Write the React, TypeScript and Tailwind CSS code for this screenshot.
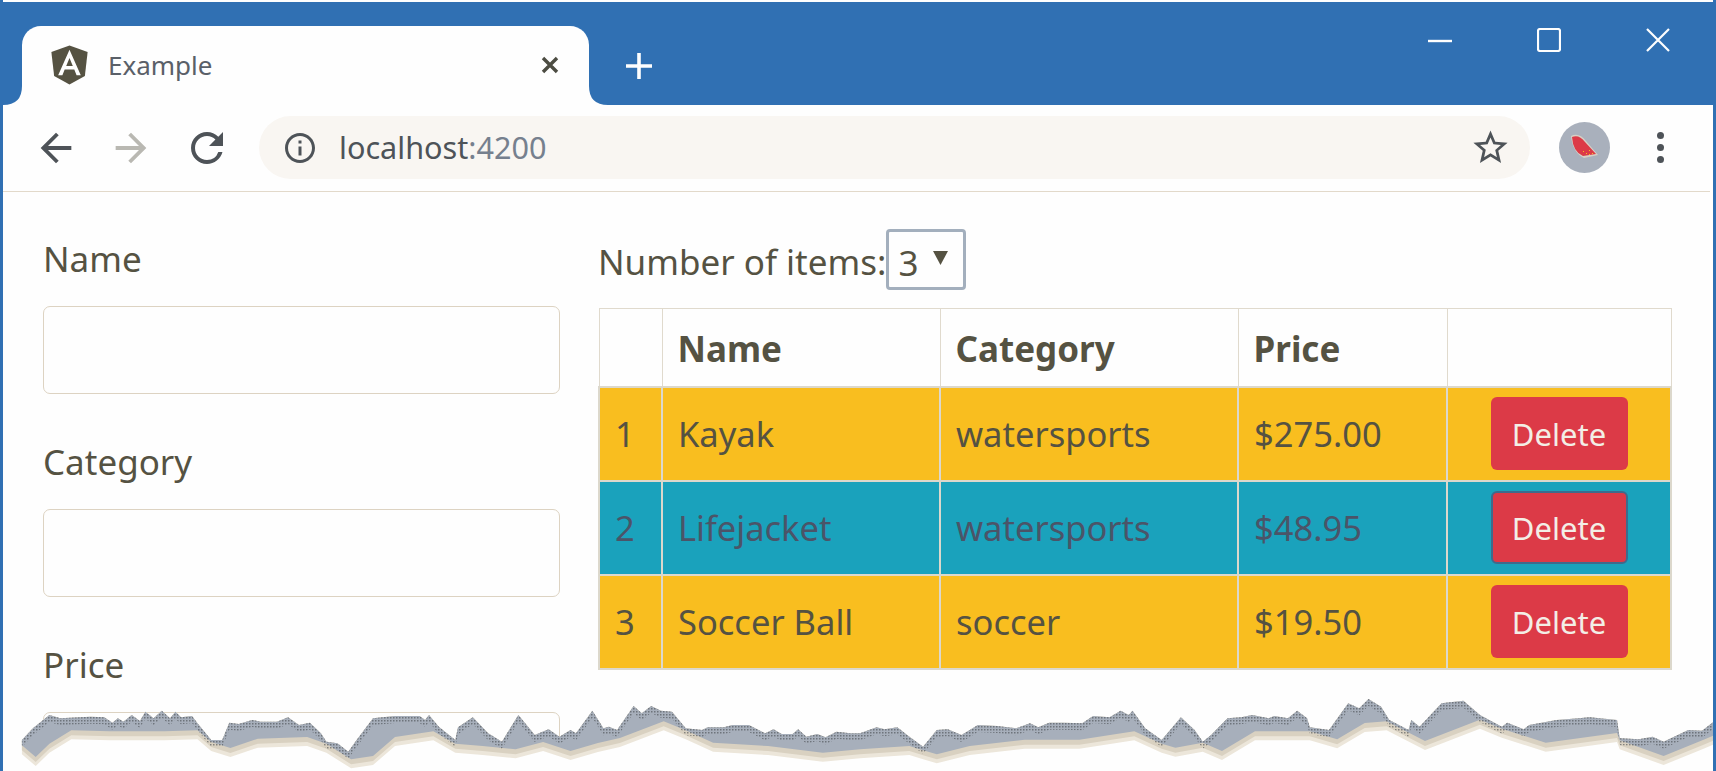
import React from 'react';

const rows = [
  { id: 1, name: 'Kayak', category: 'watersports', price: '$275.00', info: false },
  { id: 2, name: 'Lifejacket', category: 'watersports', price: '$48.95', info: true },
  { id: 3, name: 'Soccer Ball', category: 'soccer', price: '$19.50', info: false },
];

// torn paper edge, traced from the picture
const left = (p: number[][]) => p.map(([x, y]) => [x / 1.823, 640 + y / 3]);
const right = (p: number[][]) => p.map(([x, y]) => [860 + x / 1.823, 640 + y / 3]);

const tearTop = [
  ...left([[40,300],[60,265],[90,225],[110,235],[165,230],[190,232],[205,248],[215,235],[225,245],[240,225],[255,243],[265,215],[280,235],[295,212],[310,235],[320,215],[330,232],[350,228],[360,250],[385,300],[405,300],[418,248],[435,252],[460,240],[475,245],[505,245],[525,232],[545,255],[565,248],[585,280],[595,305],[615,310],[635,335],[650,300],[680,235],[720,228],[765,228],[775,240],[782,225],[800,260],[830,300],[835,262],[862,232],[890,280],[915,305],[945,225],[975,285],[1000,268],[1020,290],[1040,270],[1050,280],[1080,212],[1100,265],[1110,260],[1125,270],[1155,198],[1170,220],[1187,198],[1205,212],[1225,215],[1250,265],[1280,270],[1290,262],[1320,262],[1335,255],[1365,255],[1395,280],[1410,268],[1425,282],[1445,282],[1455,268],[1470,290],[1490,282],[1505,292],[1525,275],[1550,280]]),
  ...right([[0,280],[30,262],[45,268],[68,262],[90,290],[115,320],[140,270],[160,268],[185,285],[215,255],[250,258],[285,265],[310,250],[325,262],[345,248],[370,248],[405,250],[425,228],[455,232],[475,212],[490,225],[497,212],[520,265],[550,300],[585,232],[610,270],[625,305],[640,285],[670,235],[695,232],[715,225],[745,235],[755,228],[780,235],[797,212],[815,235],[820,262],[855,270],[890,190],[910,205],[927,177],[950,200],[965,240],[1000,270],[1005,240],[1020,260],[1060,190],[1100,182],[1130,225],[1170,260],[1180,248],[1210,268],[1220,255],[1270,240],[1310,235],[1330,232],[1380,240],[1385,295],[1420,298],[1445,290],[1465,305],[1510,270],[1535,272],[1568,230]]),
];

const tearBottom = [
  ...left([[40,310],[65,345],[90,305],[130,265],[200,268],[300,268],[360,265],[385,300],[420,318],[470,290],[560,285],[595,305],[640,352],[680,342],[720,285],[790,268],[830,305],[880,312],[940,322],[990,300],[1040,327],[1090,303],[1130,288],[1210,238],[1250,265],[1300,302],[1400,312],[1500,332]]),
  ...right([[0,322],[90,312],[115,325],[140,337],[200,312],[300,293],[400,293],[500,268],[550,305],[575,317],[625,302],[660,327],[720,268],[820,268],[870,292],[920,243],[960,238],[1030,297],[1130,233],[1170,260],[1250,302],[1380,273],[1385,295],[1465,342],[1540,292],[1568,272]]),
];

const pts = (p: number[][], dy = 0) => p.map(([x, y]) => `${x.toFixed(1)},${(y + dy).toFixed(1)}`).join(' ');
const band = (dy: number) => `${pts(tearTop)} ${pts([...tearBottom].reverse(), dy)}`;

const Field = ({ label }: { label: string }) => (
  <div className="mb-[43px]">
    <label className="block h-[50px] leading-[50px] mb-[22px]">{label}</label>
    <input type="text" className="block w-full h-[88px] bg-[#fefefe] border border-[#ddd3c2] rounded-[7px]" />
  </div>
);

const App: React.FC = () => {
  return (
    <div className="relative h-[771px] overflow-hidden bg-[#fefefe] border-x-[3px] border-[#3070b3] font-['Noto_Sans',sans-serif] text-[#555242] text-[35px]">
      {/* Title bar */}
      <div className="mt-[2px] h-[103px] bg-[#3070b3] flex items-end">
        <svg width="19" height="19" viewBox="0 0 19 19" className="shrink-0">
          <path d="M0 19 Q19 19 19 0 L19 19 Z" fill="#fefefe" />
        </svg>
        <div className="w-[567px] h-[79px] bg-[#fefefe] rounded-t-[19px] flex items-center pl-[29px] pb-[1px]">
          <svg width="37" height="40" viewBox="30 28 190 204" className="shrink-0">
            <polygon points="125,30 31.9,63.2 46.1,186.3 125,230 203.9,186.3 218.1,63.2" fill="#555242" />
            <path d="M125 52.1 66.8 182.6h21.7l11.7-29.2h49.4l11.7 29.2h21.7L125 52.1zM142 135.4h-34l17-40.9 17 40.9z" fill="#fefefe" />
          </svg>
          <span className="ml-[20px] text-[26px] text-[#5a6068]">Example</span>
          <svg width="20" height="20" viewBox="0 0 20 20" className="ml-auto mr-[29px]">
            <path d="M3 3 17 17M17 3 3 17" stroke="#4c4c42" strokeWidth="3.4" />
          </svg>
        </div>
        <svg width="19" height="19" viewBox="0 0 19 19" className="shrink-0">
          <path d="M0 0 Q0 19 19 19 L0 19 Z" fill="#fefefe" />
        </svg>
        <svg width="28" height="28" viewBox="0 0 28 28" className="ml-[17px] mb-[25px] shrink-0">
          <path d="M14 1V27M1 14H27" stroke="#fefefe" strokeWidth="3.6" />
        </svg>
        <div className="ml-auto mr-[43px] self-start mt-[26px] flex gap-[85px]">
          <svg width="24" height="24" viewBox="0 0 24 24">
            <path d="M0 13H24" stroke="#fefefe" strokeWidth="2.4" />
          </svg>
          <svg width="24" height="24" viewBox="0 0 24 24" fill="none">
            <rect x="1" y="1" width="22" height="22" rx="2" stroke="#fefefe" strokeWidth="2.2" />
          </svg>
          <svg width="24" height="24" viewBox="0 0 24 24">
            <path d="M1 1 23 23M23 1 1 23" stroke="#fefefe" strokeWidth="2.2" />
          </svg>
        </div>
      </div>

      {/* Toolbar */}
      <div className="h-[87px] mr-[3px] border-b border-[#e2d9ca] flex items-center pl-[30px] pb-[1px]">
        <svg width="46" height="46" viewBox="0 0 24 24" fill="#4e5358" className="shrink-0">
          <path d="M20 11H7.83l5.59-5.59L12 4l-8 8 8 8 1.41-1.41L7.83 13H20v-2z" />
        </svg>
        <svg width="46" height="46" viewBox="0 0 24 24" fill="#b9b8b2" className="ml-[29px] shrink-0">
          <path d="M4 11h12.17l-5.59-5.59L12 4l8 8-8 8-1.41-1.41L16.17 13H4v-2z" />
        </svg>
        <svg width="48" height="48" viewBox="0 0 24 24" fill="#4e5358" className="ml-[29px] shrink-0">
          <path d="M17.65 6.35A7.958 7.958 0 0 0 12 4c-4.42 0-7.99 3.58-7.99 8s3.57 8 7.99 8c3.73 0 6.84-2.55 7.73-6h-2.08A5.99 5.99 0 0 1 12 18c-3.31 0-6-2.69-6-6s2.69-6 6-6c1.66 0 3.14.69 4.22 1.78L13 11h7V4l-2.35 2.35z" />
        </svg>
        <div className="ml-[28px] w-[1271px] h-[63px] rounded-full bg-[#f9f6f2] flex items-center pl-[23px] pr-[19px] shrink-0">
          <svg width="36" height="36" viewBox="0 0 24 24" fill="#4e5358" className="shrink-0">
            <path d="M11 7h2v2h-2zm0 4h2v6h-2zm1-9C6.48 2 2 6.48 2 12s4.48 10 10 10 10-4.48 10-10S17.52 2 12 2zm0 18c-4.41 0-8-3.59-8-8s3.59-8 8-8 8 3.59 8 8-3.59 8-8 8z" />
          </svg>
          <span className="ml-[21px] text-[30.6px] text-[#4e5358]">
            localhost<span className="text-[#76808e]">:4200</span>
          </span>
          <svg width="41" height="41" viewBox="0 0 24 24" fill="#4e5358" className="ml-auto shrink-0">
            <path d="M22 9.24l-7.19-.62L12 2 9.19 8.63 2 9.24l5.46 4.73L5.82 21 12 17.27 18.18 21l-1.63-7.03L22 9.24zM12 15.4l-3.76 2.27 1-4.28-3.32-2.88 4.38-.38L12 6.1l1.71 4.04 4.38.38-3.32 2.88 1 4.28L12 15.4z" />
          </svg>
        </div>
        <svg width="51" height="51" viewBox="0 0 51 51" className="ml-[29px] shrink-0">
          <circle cx="25.5" cy="25.5" r="25.5" fill="#a9b0bc" />
          <path d="M12 14 Q20 10 27 19 L39 33 L25 36 Q14 31 12 14Z" fill="#d8d0c4" />
          <path d="M13 15 Q20 12 26 20 L37 32 L24 34 Q14 30 13 15Z" fill="#dc3a47" />
          <path d="M24 29h1v1h-1zM27 31h1v1h-1zM30 28h1v1h-1zM33 31h1v1h-1zM30 32h1v1h-1z" fill="#f9be1f" />
        </svg>
        <div className="ml-[47px] flex flex-col gap-[5px] shrink-0">
          <span className="block w-[7px] h-[7px] rounded-full bg-[#4e5358]" />
          <span className="block w-[7px] h-[7px] rounded-full bg-[#4e5358]" />
          <span className="block w-[7px] h-[7px] rounded-full bg-[#4e5358]" />
        </div>
      </div>

      {/* Page */}
      <div className="grid grid-cols-[518px_1072px] gap-x-[38px] pl-[39px]">
        <div className="pt-[42px] pl-[1px]">
          <Field label="Name" />
          <Field label="Category" />
          <Field label="Price" />
        </div>
        <div className="pt-[37px]">
          <div className="flex items-center h-[61px] mb-[18px]">
            <span className="pt-[5px]">Number of items:</span>
            <div className="relative">
              <select className="appearance-none block w-[80px] h-[61px] pl-[9px] pt-[5px] bg-[#fefefe] border-[3px] border-[#a3afbd] rounded-[4px]">
                <option>3</option>
              </select>
              <svg width="15" height="14" viewBox="0 0 15 14" className="absolute left-[47px] top-[22px] pointer-events-none">
                <path d="M0 0H15L7.5 14Z" fill="#555242" />
              </svg>
            </div>
          </div>
          <table className="w-[1072px] table-fixed border-collapse">
            <colgroup>
              <col className="w-[63px]" />
              <col className="w-[278px]" />
              <col className="w-[298px]" />
              <col className="w-[209px]" />
              <col className="w-[224px]" />
            </colgroup>
            <thead>
              <tr className="h-[78px]">
                <th className="border border-[#e0dacd]" />
                <th className="border border-[#e0dacd] px-[15px] pt-[4px] text-left font-bold">Name</th>
                <th className="border border-[#e0dacd] px-[15px] pt-[4px] text-left font-bold">Category</th>
                <th className="border border-[#e0dacd] px-[15px] pt-[4px] text-left font-bold">Price</th>
                <th className="border border-[#e0dacd]" />
              </tr>
            </thead>
            <tbody className="text-[34.5px]">
              {rows.map(row => (
                <tr key={row.id} className={`h-[94px] ${row.info ? 'bg-[#1aa2bc] text-[#4b5468]' : 'bg-[#f9be1f]'}`}>
                  <td className="border-2 border-[#dcd8cc] px-[15px]">{row.id}</td>
                  <td className="border-2 border-[#dcd8cc] px-[15px]">{row.name}</td>
                  <td className="border-2 border-[#dcd8cc] px-[15px]">{row.category}</td>
                  <td className="border-2 border-[#dcd8cc] px-[15px]">{row.price}</td>
                  <td className="border-2 border-[#dcd8cc] text-center">
                    <button className={`w-[137px] h-[73px] pt-[2px] rounded-[6px] bg-[#dc3a47] text-[#f3eee6] text-[31px] ${row.info ? 'border-2 border-[#3f6a8c]' : ''}`}>
                      Delete
                    </button>
                  </td>
                </tr>
              ))}
            </tbody>
          </table>
        </div>
      </div>

      {/* Torn edge */}
      <svg width="1716" height="771" viewBox="0 0 1716 771" className="absolute left-[-3px] top-0 pointer-events-none">
        <defs>
          <pattern id="grain" width="3" height="3" patternUnits="userSpaceOnUse">
            <rect width="1.5" height="1.5" fill="#3f4347" />
          </pattern>
        </defs>
        <polygon points={`0,743 18,741 ${pts(tearTop)} 1716,771 0,771`} fill="#fefefe" />
        <polygon points={band(11)} fill="#ece6da" />
        <polygon points={band(7)} fill="#d9d1c1" />
        <polygon points={band(2)} fill="#a7afbb" />
        <polygon points={`${pts(tearTop)} ${pts([...tearTop].reverse(), 7)}`} fill="url(#grain)" opacity="0.55" />
      </svg>
    </div>
  );
};

export default App;
